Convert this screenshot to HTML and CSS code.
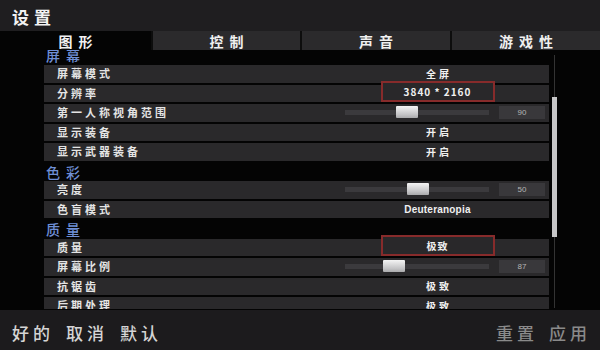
FILE: index.html
```html
<!DOCTYPE html>
<html lang="zh-CN">
<head>
<meta charset="utf-8">
<title>设置</title>
<link rel="stylesheet" href="styles.css">
</head>
<body>
<div class="app">
  <header class="header"><h1 class="title">设置</h1></header>
  <nav class="tabs">
    <div class="tab active">图形</div>
    <div class="tab">控制</div>
    <div class="tab">声音</div>
    <div class="tab">游戏性</div>
  </nav>
  <main class="main">
    <div class="gutter"></div>
    <div class="list">
      <div class="list-inner">
        <div class="section first">屏幕</div>
        <div class="row"><span class="label">屏幕模式</span><div class="val"><span class="txt">全屏</span></div></div>
        <div class="row"><span class="label">分辨率</span><div class="val"><span class="box">3840 * 2160</span></div></div>
        <div class="row"><span class="label">第一人称视角范围</span><div class="val slider"><div class="track"><div class="thumb" style="left:51px"></div></div><div class="num">90</div></div></div>
        <div class="row"><span class="label">显示装备</span><div class="val"><span class="txt">开启</span></div></div>
        <div class="row"><span class="label">显示武器装备</span><div class="val"><span class="txt">开启</span></div></div>
        <div class="section">色彩</div>
        <div class="row"><span class="label">亮度</span><div class="val slider"><div class="track"><div class="thumb" style="left:62px"></div></div><div class="num">50</div></div></div>
        <div class="row"><span class="label">色盲模式</span><div class="val"><span class="latin">Deuteranopia</span></div></div>
        <div class="section">质量</div>
        <div class="row"><span class="label">质量</span><div class="val"><span class="box">极致</span></div></div>
        <div class="row"><span class="label">屏幕比例</span><div class="val slider"><div class="track"><div class="thumb" style="left:38px"></div></div><div class="num">87</div></div></div>
        <div class="row"><span class="label">抗锯齿</span><div class="val"><span class="txt">极致</span></div></div>
        <div class="row"><span class="label">后期处理</span><div class="val"><span class="txt">极致</span></div></div>
      </div>
    </div>
    <div class="scrollbar"><div class="scroll-thumb"></div></div>
  </main>
  <footer class="footer">
    <div class="actions left"><span>好的</span><span>取消</span><span>默认</span></div>
    <div class="actions right"><span>重置</span><span>应用</span></div>
  </footer>
</div>
</body>
</html>
```

FILE: styles.css
```css
* { box-sizing: border-box; margin: 0; padding: 0; }
html, body { width: 600px; height: 350px; overflow: hidden; }
body {
  background: #040404;
  font-family: "Noto Sans CJK SC", "Noto Sans", "Liberation Sans", sans-serif;
  color: #e6e6e6;
}
.app { display: flex; flex-direction: column; height: 350px; }

.header {
  height: 31px;
  background: #1f1e20;
  display: flex;
  align-items: center;
  padding-left: 12px;
}
.title {
  font-size: 17px;
  font-weight: 700;
  letter-spacing: 5px;
  color: #f2f2f2;
  line-height: 1;
  margin-top: 1px;
}

.tabs {
  height: 19px;
  display: grid;
  grid-template-columns: 151px 147px 148px 148px;
  column-gap: 2px;
  background: #0d0d0d;
}
.tab {
  background: #2b2a2c;
  display: flex;
  align-items: center;
  justify-content: center;
  font-size: 14px;
  font-weight: 700;
  letter-spacing: 6px;
  padding-left: 6px;
  color: #f0f0f0;
  line-height: 1;
}
.tab.active { background: #040404; }

.main {
  height: 260px;
  display: flex;
}
.gutter { width: 44px; flex: none; }
.list {
  width: 505px;
  height: 259px;
  overflow: hidden;
  flex: none;
}
.list-inner { margin-top: -7px; }

.section {
  height: 18.5px;
  display: flex;
  align-items: center;
  padding-left: 2px;
  font-size: 14px;
  font-weight: 500;
  letter-spacing: 6px;
  color: #6f8fd6;
  line-height: 1;
}
.section.first { height: 22px; padding-top: 2px; }

.row {
  height: 17.5px;
  margin-bottom: 2px;
  background: #2a292b;
  display: flex;
  align-items: center;
}
.label {
  flex: 1;
  padding-left: 13px;
  font-size: 11px;
  font-weight: 700;
  letter-spacing: 3px;
  color: #e4e4e4;
  line-height: 1;
}
.val {
  width: 223px;
  height: 100%;
  display: flex;
  align-items: center;
  justify-content: center;
}
.txt {
  font-size: 10px;
  font-weight: 700;
  letter-spacing: 3px;
  padding-left: 3px;
  color: #f0f0f0;
  line-height: 1;
}
.latin {
  font-family: "Liberation Sans", Arial, sans-serif;
  font-size: 10px;
  font-weight: 700;
  letter-spacing: 0.2px;
  color: #f0f0f0;
}
.box {
  width: 114px;
  height: 21px;
  margin-top: -3px;
  border: 2px solid #872b2b;
  background: #29282a;
  display: flex;
  align-items: center;
  justify-content: center;
  font-size: 10px;
  font-weight: 700;
  letter-spacing: 1px;
  color: #f0f0f0;
  line-height: 1;
}
.val.slider {
  justify-content: flex-start;
  padding-left: 19px;
  gap: 10px;
}
.track {
  position: relative;
  width: 144px;
  height: 5px;
  background: #3b3a3d;
}
.thumb {
  position: absolute;
  top: -4px;
  width: 22px;
  height: 12px;
  background: linear-gradient(#f4f4f4, #c4c4c6 70%, #a9a9ab);
  border-radius: 1px;
}
.num {
  width: 46px;
  height: 13px;
  background: #39383b;
  display: flex;
  align-items: center;
  justify-content: center;
  font-family: "Liberation Sans", Arial, sans-serif;
  font-size: 8px;
  color: #b4b4b4;
}

.scrollbar {
  margin-left: 3px;
  margin-top: 5px;
  width: 5px;
  height: 253px;
  flex: none;
  background: linear-gradient(90deg, transparent 2px, #333 2px, #333 3px, transparent 3px);
}
.scroll-thumb {
  margin-top: 42px;
  height: 140px;
  background: #c6c6c8;
}

.footer {
  height: 40px;
  background: #1c1b1d;
  display: flex;
  align-items: center;
  justify-content: space-between;
  padding: 5px 9px 0 12px;
}
.actions {
  display: flex;
  gap: 12px;
  font-size: 17px;
  font-weight: 500;
  letter-spacing: 4px;
  line-height: 1;
}
.actions.left { color: #d4d4d4; }
.actions.right { color: #8a8a8a; gap: 11px; }
```
